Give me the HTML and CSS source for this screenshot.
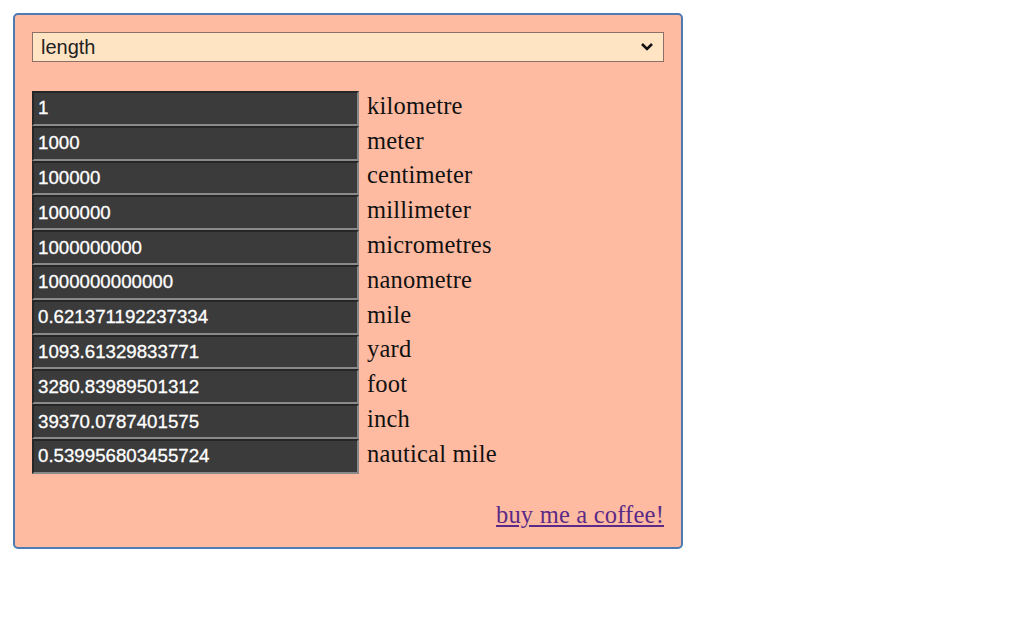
FILE: index.html
```html
<!DOCTYPE html>
<html>
<head>
	<meta charset="utf-8">
	<title>unit converter</title>
	<link rel="stylesheet" href="styles.css">
</head>
<body>
	<div class="box">
		<div class="pick">
			<select class="kind">
				<option>length</option>
				<option>mass</option>
				<option>time</option>
			</select>
			<svg class="arrow" width="14" height="10" viewBox="0 0 14 10"><path d="M2 2 L7 7 L12 2" fill="none" stroke="#111" stroke-width="2.6"/></svg>
		</div>
		<div class="list">
			<div class="row"><input type="text" value="1"><span>kilometre</span></div>
			<div class="row"><input type="text" value="1000"><span>meter</span></div>
			<div class="row"><input type="text" value="100000"><span>centimeter</span></div>
			<div class="row"><input type="text" value="1000000"><span>millimeter</span></div>
			<div class="row"><input type="text" value="1000000000"><span>micrometres</span></div>
			<div class="row"><input type="text" value="1000000000000"><span>nanometre</span></div>
			<div class="row"><input type="text" value="0.621371192237334"><span>mile</span></div>
			<div class="row"><input type="text" value="1093.61329833771"><span>yard</span></div>
			<div class="row"><input type="text" value="3280.83989501312"><span>foot</span></div>
			<div class="row"><input type="text" value="39370.0787401575"><span>inch</span></div>
			<div class="row"><input type="text" value="0.539956803455724"><span>nautical mile</span></div>
		</div>
		<div class="foot"><a href="#">buy me a coffee!</a></div>
	</div>
</body>
</html>
```

FILE: styles.css
```css
* {
	margin: 0;
	padding: 0;
	box-sizing: border-box;
}
body {
	background: #fff;
	font-family: "Liberation Serif", "Times New Roman", serif;
}
.box {
	margin: 13px;
	width: 670px;
	padding: 17px;
	background-color: #ffbba1;
	border: 2px solid #4d7bb3;
	border-radius: 5px;
}
.pick {
	position: relative;
	height: 30px;
}
.kind {
	appearance: none;
	-webkit-appearance: none;
	width: 632px;
	height: 30px;
	padding: 0 8px;
	background-color: #ffe4c4;
	border: 1px solid #8a7066;
	border-radius: 0;
	font-family: "Liberation Sans", Arial, sans-serif;
	font-size: 20px;
	color: #222;
	outline: none;
}
.arrow {
	position: absolute;
	right: 10px;
	top: 10px;
	pointer-events: none;
}
.list {
	margin-top: 29px;
}
.row {
	display: flex;
	align-items: center;
	height: 34.8px;
}
.row input {
	width: 327px;
	height: 34.8px;
	padding: 0 4px;
	background-color: #3b3b3b;
	color: #fff;
	border: 2px solid;
	border-color: #262626 #8a8a8a #8a8a8a #262626;
	font-family: "Liberation Sans", Arial, sans-serif;
	font-size: 18.7px;
	-webkit-text-stroke: 0.3px #fff;
	outline: none;
}
.row span {
	margin-left: 8px;
	margin-bottom: 5px;
	font-size: 24.5px;
	letter-spacing: 0.2px;
	color: #111;
	line-height: 28px;
}
.foot {
	margin-top: 28px;
	text-align: right;
	line-height: 25px;
}
.foot a {
	font-size: 24.5px;
	letter-spacing: 0.2px;
	color: #5a2a86;
}
```
